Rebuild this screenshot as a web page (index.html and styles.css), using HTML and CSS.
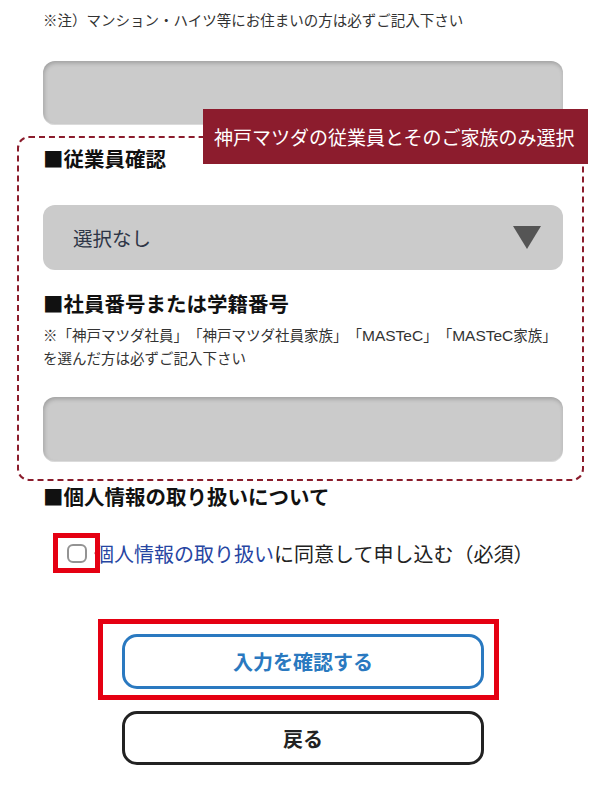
FILE: index.html
```html
<!DOCTYPE html>
<html lang="ja">
<head>
<meta charset="utf-8">
<title>フォーム</title>
<link rel="stylesheet" href="styles.css">
</head>
<body>
<div class="page">
  <p class="note top-note">※注）マンション・ハイツ等にお住まいの方は必ずご記入下さい</p>
  <div class="field first-field"></div>

  <section class="staff-box">
    <div class="badge">神戸マツダの従業員とそのご家族のみ選択</div>
    <h2 class="heading">■従業員確認</h2>
    <div class="select">
      <span class="select-text">選択なし</span>
      <span class="select-arrow"></span>
    </div>
    <h2 class="heading heading-2">■社員番号または学籍番号</h2>
    <p class="note sub-note">※「神戸マツダ社員」「神戸マツダ社員家族」「<span class="latin">MASTeC</span>」「<span class="latin">MASTeC</span>家族」<br>を選んだ方は必ずご記入下さい</p>
    <div class="field third-field"></div>
  </section>

  <h2 class="heading heading-3">■個人情報の取り扱いについて</h2>
  <div class="agree-row">
    <span class="mark-box"><span class="checkbox"></span></span>
    <span class="agree-text"><a class="link">個人情報の取り扱い</a>に同意して申し込む（必須）</span>
  </div>

  <div class="buttons">
    <div class="mark-wrap">
      <button class="btn btn-confirm">入力を確認する</button>
    </div>
    <button class="btn btn-back">戻る</button>
  </div>
</div>
</body>
</html>
```

FILE: styles.css
```css
* { box-sizing: border-box; }
html, body { margin: 0; padding: 0; background: #fff; }
body {
  font-family: "Noto Sans CJK JP", "Noto Sans", sans-serif;
  color: #222;
  width: 600px;
  height: 801px;
  overflow: hidden;
  text-spacing-trim: space-all;
}
.page { padding-top: 10px; }
.note {
  margin: 0;
  font-size: 14.5px;
  color: #333;
}
.latin {
  font-family: "Liberation Sans", "Noto Sans CJK JP", sans-serif;
  font-size: 15.5px;
  line-height: 1;
}
.top-note {
  line-height: 20px;
  padding-left: 43px;
}
.field {
  height: 64px;
  width: 520px;
  background: #cbcbcb;
  border-radius: 12px;
  box-shadow: inset 1px 2px 4px rgba(0,0,0,0.22), inset 0 -1px 1px rgba(255,255,255,0.5);
}
.first-field { margin: 31px 0 0 43px; }

.staff-box {
  position: relative;
  margin: 11px 16px 0 17px;
  border: 2px dashed #8b1c2c;
  border-radius: 12px;
  padding: 8px 19px 17px 24px;
}
.badge {
  position: absolute;
  top: -29px;
  right: -6px;
  width: 385px;
  height: 55px;
  background: #8c1c2d;
  color: #fff;
  font-size: 19px;
  line-height: 55px;
  padding-left: 11px;
  white-space: nowrap;
}
.heading {
  margin: 0;
  font-size: 20.5px;
  line-height: 24px;
  font-weight: 700;
  color: #111;
}
.select {
  margin-top: 35px;
  height: 65px;
  background: #cbcbcb;
  border-radius: 12px;
  display: flex;
  align-items: center;
  justify-content: space-between;
  padding: 0 22px 0 30px;
}
.select-text {
  font-size: 19.5px;
  color: #2e3546;
}
.select-arrow {
  width: 0;
  height: 0;
  border-left: 14.5px solid transparent;
  border-right: 14.5px solid transparent;
  border-top: 23px solid #555;
}
.heading-2 { margin-top: 21px; }
.sub-note {
  margin-top: 8px;
  line-height: 23px;
}
.third-field { margin-top: 28px; height: 65px; }

.heading-3 {
  margin: 3px 0 0 43px;
}
.agree-row {
  margin-top: 25px;
  padding-left: 53px;
  display: flex;
  align-items: center;
}
.mark-box {
  position: relative;
  z-index: 1;
  width: 47px;
  height: 40px;
  border: 5px solid #e50012;
  display: flex;
  align-items: center;
  justify-content: center;
  padding-top: 1px;
}
.checkbox {
  width: 20px;
  height: 19px;
  border: 2px solid #939393;
  border-radius: 6px;
  background: #fff;
}
.agree-text {
  margin-left: -6px;
  font-size: 20px;
  color: #222;
  white-space: nowrap;
}
.link { color: #2645a2; }

.buttons {
  margin-top: 46px;
  padding-left: 98px;
  display: flex;
  flex-direction: column;
}
.mark-wrap {
  width: 401px;
  height: 81px;
  border: 5px solid #e50012;
  padding: 10px 0 0 19px;
}
.btn {
  display: block;
  width: 362px;
  height: 55px;
  border-radius: 15px;
  background: #fff;
  font-family: "Noto Sans CJK JP", "Noto Sans", sans-serif;
  font-size: 20px;
  font-weight: 700;
  padding: 0;
}
.btn-confirm {
  border: 3px solid #2a79c0;
  color: #2a79c0;
}
.btn-back {
  margin: 11px 0 0 24px;
  height: 54px;
  border: 3px solid #222;
  color: #222;
}
```
